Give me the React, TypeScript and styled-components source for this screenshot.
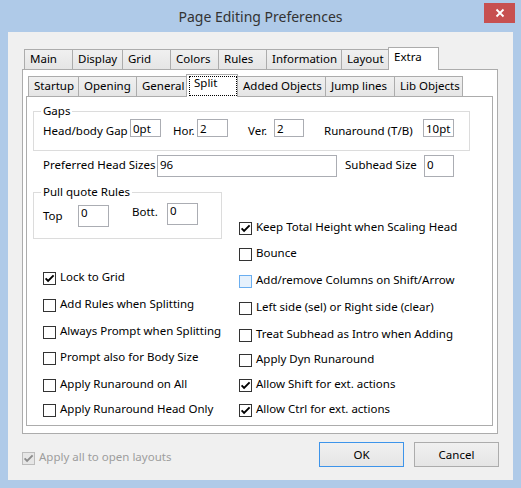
import React from "react";
import styled, { createGlobalStyle } from "styled-components";

const GlobalStyle = createGlobalStyle`
  html, body { margin: 0; padding: 0; }
  body {
    background: #afcae8;
    font-family: "Noto Sans", "Open Sans", sans-serif;
    font-size: 11.5px;
    color: #000;
  }
  * { box-sizing: border-box; }
`;

const Window = styled.div`
  width: 521px;
  height: 488px;
  display: flex;
  flex-direction: column;
  background: #afcae8;
  overflow: hidden;
`;

const TitleBar = styled.div`
  height: 32px;
  flex: none;
  display: grid;
  grid-template-columns: 1fr auto 1fr;
  align-items: start;
`;

const Title = styled.div`
  grid-column: 2;
  font-size: 14px;
  line-height: 34px;
  color: #333;
  white-space: nowrap;
`;

const CloseButton = styled.div`
  grid-column: 3;
  justify-self: end;
  width: 31px;
  height: 20px;
  margin: 3px 6px 0 0;
  background: #c75050;
  display: flex;
  align-items: center;
  justify-content: center;
`;

const Client = styled.div`
  flex: 1;
  margin: 0 8px 8px;
  background: #f0f0f0;
  padding: 15px 15px 0 14px;
  display: flex;
  flex-direction: column;
`;

const TabStrip = styled.div<{ $ml: number }>`
  display: flex;
  align-items: flex-end;
  height: 22px;
  flex: none;
  margin-left: ${(p) => p.$ml}px;
`;

const Tab = styled.div<{ $w: number; $selected?: boolean }>`
  flex: none;
  width: ${(p) => p.$w}px;
  height: ${(p) => (p.$selected ? 23 : 20)}px;
  margin-left: -1px;
  margin-bottom: ${(p) => (p.$selected ? -1 : 0)}px;
  &:first-child { margin-left: 0; }
  border: 1px solid #acacac;
  border-bottom: none;
  background: ${(p) => (p.$selected ? "#fff" : "linear-gradient(#f0f0f0, #e5e5e5)")};
  padding: ${(p) => (p.$selected ? 1 : 1)}px 0 0 5px;
  line-height: 16px;
  white-space: nowrap;
  position: relative;
  z-index: ${(p) => (p.$selected ? 2 : 1)};
`;

const FocusTab = styled(Tab)`
  padding: 0;
`;

const FocusBox = styled.div`
  margin: 1px 0 0 2px;
  height: 20px;
  border: 1px dotted #000;
  padding-left: 4px;
  line-height: 12px;
`;

const OuterPanel = styled.div`
  height: 365px;
  flex: none;
  border: 1px solid #acacac;
  background: #fff;
  padding: 4px 4px 7px 3px;
  display: flex;
  flex-direction: column;
`;

const InnerPanel = styled.div`
  flex: 1;
  border: 1px solid #acacac;
  background: #fff;
  padding: 7px 0 0 6px;
  display: flex;
  flex-direction: column;
`;

const GroupBox = styled.fieldset<{ $w: number; $pt: number; $pb: number }>`
  margin: 0;
  min-width: 0;
  width: ${(p) => p.$w}px;
  border: 1px solid #dcdcdc;
  padding: ${(p) => p.$pt}px 0 ${(p) => p.$pb}px 9px;
`;

const Legend = styled.legend`
  padding: 0 2px;
  margin-left: -2px;
  line-height: 14px;
  white-space: nowrap;
`;

const Row = styled.div<{ $h: number; $mt?: number; $pl?: number }>`
  display: flex;
  align-items: flex-start;
  height: ${(p) => p.$h}px;
  margin-top: ${(p) => p.$mt ?? 0}px;
  padding-left: ${(p) => p.$pl ?? 0}px;
`;

const Label = styled.span<{ $w?: number; $ml?: number; $mt?: number }>`
  flex: none;
  width: ${(p) => (p.$w ? `${p.$w}px` : "auto")};
  margin-left: ${(p) => p.$ml ?? 0}px;
  margin-top: ${(p) => p.$mt ?? 0}px;
  line-height: 16px;
  white-space: nowrap;
`;

const Field = styled.div<{ $w: number; $h: number; $ml?: number; $mt?: number; $lh?: number }>`
  flex: none;
  width: ${(p) => p.$w}px;
  height: ${(p) => p.$h}px;
  margin-left: ${(p) => p.$ml ?? 0}px;
  margin-top: ${(p) => p.$mt ?? 0}px;
  border: 1px solid #abadb3;
  background: #fff;
  padding: ${(p) => (p.$lh ? 0 : 1)}px 0 0 2px;
  line-height: ${(p) => p.$lh ?? 16}px;
  white-space: nowrap;
  overflow: hidden;
`;

const Columns = styled.div`
  display: flex;
  margin-top: 8px;
`;

const LeftColumn = styled.div`
  width: 206px;
  flex: none;
  display: flex;
  flex-direction: column;
`;

const RightColumn = styled.div`
  flex: 1;
  display: flex;
  flex-direction: column;
  padding-top: 37px;
`;

const CheckList = styled.div<{ $mt: number; $pl: number }>`
  display: flex;
  flex-direction: column;
  margin-top: ${(p) => p.$mt}px;
  padding-left: ${(p) => p.$pl}px;
`;

const CheckRow = styled.div<{ $h: number }>`
  display: flex;
  align-items: flex-start;
  height: ${(p) => p.$h}px;
`;

type BoxVariant = "normal" | "hover" | "disabled";

const Box = styled.span<{ $variant: BoxVariant }>`
  flex: none;
  width: 13px;
  height: 13px;
  border: 1px solid
    ${(p) => (p.$variant === "hover" ? "#6aaef0" : p.$variant === "disabled" ? "#bcbcbc" : "#333")};
  background: ${(p) => (p.$variant === "hover" ? "#e6f1fc" : p.$variant === "disabled" ? "#e6e6e6" : "#fff")};
  display: flex;
  align-items: center;
  justify-content: center;
`;

const CheckText = styled.span<{ $disabled?: boolean }>`
  margin-left: 4px;
  margin-top: -3px;
  line-height: 16px;
  white-space: nowrap;
  color: ${(p) => (p.$disabled ? "#9d9d9d" : "#000")};
`;

const BottomBar = styled.div`
  display: flex;
  align-items: flex-start;
  margin-top: 8px;
  margin-right: -1px;
`;

const BottomCheck = styled.div`
  display: flex;
  align-items: flex-start;
  margin-top: 10px;
  flex: 1;
`;

const Button = styled.div<{ $default?: boolean }>`
  flex: none;
  width: 85px;
  height: 25px;
  margin-left: 10px;
  border: 1px solid ${(p) => (p.$default ? "#3d94ea" : "#acacac")};
  background: linear-gradient(#f0f0f0, #e5e5e5);
  display: flex;
  align-items: center;
  justify-content: center;
  line-height: 16px;
`;

function CheckMark({ color }: { color: string }) {
  return (
    <svg width="11" height="11" viewBox="0 0 11 11">
      <path d="M1.6 5.4 L4.1 8 L9.6 2.4" fill="none" stroke={color} strokeWidth="1.9" />
    </svg>
  );
}

type CheckItem = { text: string; h: number; checked?: boolean; variant?: BoxVariant };

function Check({ item }: { item: CheckItem }) {
  const variant = item.variant ?? "normal";
  return (
    <CheckRow $h={item.h}>
      <Box $variant={variant}>{item.checked && <CheckMark color={variant === "disabled" ? "#8c8c8c" : "#000"} />}</Box>
      <CheckText $disabled={variant === "disabled"}>{item.text}</CheckText>
    </CheckRow>
  );
}

const outerTabs: [string, number][] = [
  ["Main", 49],
  ["Display", 51],
  ["Grid", 49],
  ["Colors", 49],
  ["Rules", 49],
  ["Information", 76],
  ["Layout", 48],
  ["Extra", 51],
];

const innerTabs: [string, number][] = [
  ["Startup", 51],
  ["Opening", 59],
  ["General", 51],
  ["Split", 52],
  ["Added Objects", 89],
  ["Jump lines", 70],
  ["Lib Objects", 69],
];

const leftChecks: CheckItem[] = [
  { text: "Lock to Grid", h: 27, checked: true },
  { text: "Add Rules when Splitting", h: 27 },
  { text: "Always Prompt when Splitting", h: 26 },
  { text: "Prompt also for Body Size", h: 27 },
  { text: "Apply Runaround on All", h: 25 },
  { text: "Apply Runaround Head Only", h: 16 },
];

const rightChecks: CheckItem[] = [
  { text: "Keep Total Height when Scaling Head", h: 26, checked: true },
  { text: "Bounce", h: 27 },
  { text: "Add/remove Columns on Shift/Arrow", h: 27, variant: "hover" },
  { text: "Left side (sel) or Right side (clear)", h: 27 },
  { text: "Treat Subhead as Intro when Adding", h: 25 },
  { text: "Apply Dyn Runaround", h: 25 },
  { text: "Allow Shift for ext. actions", h: 25, checked: true },
  { text: "Allow Ctrl for ext. actions", h: 16, checked: true },
];

export default function App() {
  return (
    <>
      <GlobalStyle />
      <Window>
        <TitleBar>
          <Title>Page Editing Preferences</Title>
          <CloseButton>
            <svg width="10" height="10" viewBox="0 0 10 10">
              <path d="M1.5 1.5 L8.5 8.5 M8.5 1.5 L1.5 8.5" stroke="#fff" strokeWidth="1.8" />
            </svg>
          </CloseButton>
        </TitleBar>
        <Client>
          <TabStrip $ml={2}>
            {outerTabs.map(([t, w]) => (
              <Tab key={t} $w={w} $selected={t === "Extra"}>
                {t}
              </Tab>
            ))}
          </TabStrip>
          <OuterPanel>
            <TabStrip $ml={2}>
              {innerTabs.map(([t, w]) =>
                t === "Split" ? (
                  <FocusTab key={t} $w={w} $selected>
                    <FocusBox>{t}</FocusBox>
                  </FocusTab>
                ) : (
                  <Tab key={t} $w={w}>
                    {t}
                  </Tab>
                )
              )}
            </TabStrip>
            <InnerPanel>
              <GroupBox $w={437} $pt={1} $pb={13}>
                <Legend>Gaps</Legend>
                <Row $h={18}>
                  <Label $w={87} $mt={4}>Head/body Gap</Label>
                  <Field $w={31} $h={18}>0pt</Field>
                  <Label $w={24} $ml={12} $mt={4}>Hor.</Label>
                  <Field $w={31} $h={18}>2</Field>
                  <Label $w={26} $ml={20} $mt={4}>Ver.</Label>
                  <Field $w={30} $h={18}>2</Field>
                  <Label $w={99} $ml={20} $mt={4}>Runaround (T/B)</Label>
                  <Field $w={31} $h={18}>10pt</Field>
                </Row>
              </GroupBox>
              <Row $h={22} $mt={4} $pl={10}>
                <Label $w={114} $mt={2}>Preferred Head Sizes</Label>
                <Field $w={180} $h={22}>96</Field>
                <Label $w={79} $ml={8} $mt={2}>Subhead Size</Label>
                <Field $w={30} $h={22}>0</Field>
              </Row>
              <Columns>
                <LeftColumn>
                  <GroupBox $w={189} $pt={4} $pb={11}>
                    <Legend>Pull quote Rules</Legend>
                    <Row $h={24}>
                      <Label $w={35} $mt={5}>Top</Label>
                      <Field $w={31} $h={22} $mt={2} $lh={14}>0</Field>
                      <Label $w={35} $ml={23} $mt={1}>Bott.</Label>
                      <Field $w={31} $h={22} $lh={14}>0</Field>
                    </Row>
                  </GroupBox>
                  <CheckList $mt={33} $pl={10}>
                    {leftChecks.map((c) => (
                      <Check key={c.text} item={c} />
                    ))}
                  </CheckList>
                </LeftColumn>
                <RightColumn>
                  <CheckList $mt={0} $pl={0}>
                    {rightChecks.map((c) => (
                      <Check key={c.text} item={c} />
                    ))}
                  </CheckList>
                </RightColumn>
              </Columns>
            </InnerPanel>
          </OuterPanel>
          <BottomBar>
            <BottomCheck>
              <Check item={{ text: "Apply all to open layouts", h: 16, checked: true, variant: "disabled" }} />
            </BottomCheck>
            <Button $default>OK</Button>
            <Button>Cancel</Button>
          </BottomBar>
        </Client>
      </Window>
    </>
  );
}
